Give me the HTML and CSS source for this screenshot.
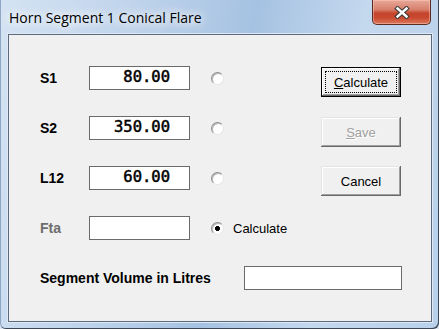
FILE: index.html
```html
<!DOCTYPE html>
<html lang="en">
  <head>
    <meta charset="UTF-8" />
    <title>Horn Segment 1 Conical Flare</title>
    <link rel="stylesheet" href="styles.css">
  </head>
  <body>
    <div class="window">
      <div class="titlebar">
        <span class="title">Horn Segment 1 Conical Flare</span>
        <button class="close">
          <svg width="16" height="13" viewBox="0 0 16 13">
            <path d="M3.5 2.5 L12.5 10.5 M12.5 2.5 L3.5 10.5" stroke="#3c3c3c" stroke-width="4.6" stroke-linecap="square" fill="none" />
            <path d="M3.5 2.5 L12.5 10.5 M12.5 2.5 L3.5 10.5" stroke="#fff" stroke-width="2.4" stroke-linecap="square" fill="none" />
          </svg>
        </button>
      </div>

      <div class="client">
        <div class="form">
          <!-- row 1 -->
          <span class="lbl">S1</span>
          <div class="box num">80.00</div>
          <span class="radio c4"></span>
          <button class="btn default c6"><span class="focus"><u>C</u>alculate</span></button>

          <!-- row 2 -->
          <span class="lbl">S2</span>
          <div class="box num">350.00</div>
          <span class="radio c4"></span>
          <button class="btn c6" disabled><span class="face"><u>S</u>ave</span></button>

          <!-- row 3 -->
          <span class="lbl">L12</span>
          <div class="box num">60.00</div>
          <span class="radio c4"></span>
          <button class="btn c6 cancel"><span class="face">Cancel</span></button>

          <!-- row 4 -->
          <span class="lbl off">Fta</span>
          <div class="box"></div>
          <span class="radio checked c4"></span>
          <span class="rlabel">Calculate</span>

          <!-- row 5 -->
          <div class="volume">
            <span class="lbl">Segment Volume in Litres</span>
            <div class="box wide"></div>
          </div>
        </div>
      </div>
    </div>
  </body>
</html>
```

FILE: styles.css
```css
html,
body {
  margin: 0;
  padding: 0;
  background-color: #dde6f0;
}

.window {
  width: 439px;
  height: 329px;
  box-sizing: border-box;
  display: flex;
  flex-direction: column;
  border-radius: 0 0 6px 6px;
  background: linear-gradient(100deg, #d4e3f3 0%, #bed3eb 28%, #a6c2e2 52%, #c4d8ee 74%, #b8d0ea 100%);
  box-shadow: inset -1px -1px 0 #3d4756, inset 1px 0 0 #8ea6c4;
  font-family: "Liberation Sans", Arial, sans-serif;
  overflow: hidden;
}

.titlebar {
  height: 34px;
  display: flex;
  align-items: flex-start;
  flex-shrink: 0;
}

.title {
  flex: 1;
  padding: 8px 0 0 9px;
  font-family: "Open Sans", "Noto Sans", sans-serif;
  font-size: 14px;
  line-height: 19px;
  color: #000;
  text-shadow: 0 0 8px #fff, 0 0 12px #fff, 0 0 16px rgba(255, 255, 255, 0.9);
}

.close {
  width: 59px;
  height: 25px;
  margin-right: 8px;
  padding: 0;
  border: 1px solid #5b2a22;
  border-top: none;
  border-radius: 0 0 5px 5px;
  background: linear-gradient(#e7a898 0%, #d8806c 40%, #c5442c 55%, #c94a30 75%, #dd7a5c 100%);
  box-shadow: inset 0 0 0 1px rgba(255, 210, 200, 0.45);
  display: flex;
  justify-content: center;
  align-items: center;
}

.client {
  flex: 1;
  margin: 0 7px 7px 8px;
  padding: 31px 30px 0 31px;
  background-color: #f0f0f0;
  border: 1px solid #5c6a7e;
  box-shadow: 0 0 0 1px #dfe9f6;
}

.form {
  display: grid;
  grid-template-columns: 49px 101px 21px 13px 1fr 80px;
  grid-template-rows: repeat(5, 24px);
  row-gap: 26px;
  align-items: center;
}

.lbl {
  font-size: 14px;
  font-weight: bold;
  color: #000;
}

.lbl.off {
  color: #6d6d6d;
}

.box {
  height: 24px;
  box-sizing: border-box;
  background-color: #fff;
  border: 1px solid #6a6a6a;
}

.num {
  text-align: right;
  padding-right: 19px;
  font-family: "DejaVu Sans Mono", "Liberation Mono", monospace;
  font-size: 15.5px;
  line-height: 20px;
  color: #000;
  -webkit-text-stroke: 0.5px #000;
}

.c4 {
  grid-column: 4;
}

.c6 {
  grid-column: 6;
}

.radio {
  width: 13px;
  height: 13px;
  box-sizing: border-box;
  border-radius: 50%;
  background-color: #fff;
  border: 1px solid;
  border-color: #8d8d8d #e6e6e6 #e6e6e6 #8d8d8d;
  box-shadow: inset 1px 1px 0 #b8b8b8;
}

.radio.checked {
  background: radial-gradient(circle, #000 0, #000 2.2px, #fff 2.8px);
}

.rlabel {
  font-size: 13px;
  padding-left: 9px;
  color: #000;
}

.btn {
  align-self: start;
  margin-top: 1px;
  height: 30px;
  padding: 0;
  border: none;
  background-color: #f0f0f0;
  font-family: "Liberation Sans", Arial, sans-serif;
  font-size: 13px;
  color: #000;
  display: flex;
  box-shadow: inset -1px -1px 0 #696969, inset 1px 1px 0 #e3e3e3, inset -2px -2px 0 #a0a0a0, inset 2px 2px 0 #fff;
}

.btn.cancel {
  margin-top: 0;
}

.btn.default {
  box-shadow: inset 0 0 0 1px #000, inset -2px -2px 0 #696969, inset 2px 2px 0 #fff, inset -3px -3px 0 #a0a0a0;
}

.btn:disabled {
  color: #a0a0a0;
  text-shadow: 1px 1px 0 #fff;
}

.face,
.focus {
  flex: 1;
  display: flex;
  justify-content: center;
  align-items: center;
}

.focus {
  margin: 4px;
  border: 1px dotted #000;
}

.volume {
  grid-column: 1 / -1;
  display: flex;
  align-items: center;
}

.box.wide {
  width: 158px;
  margin-left: auto;
  margin-right: -1px;
}
```
